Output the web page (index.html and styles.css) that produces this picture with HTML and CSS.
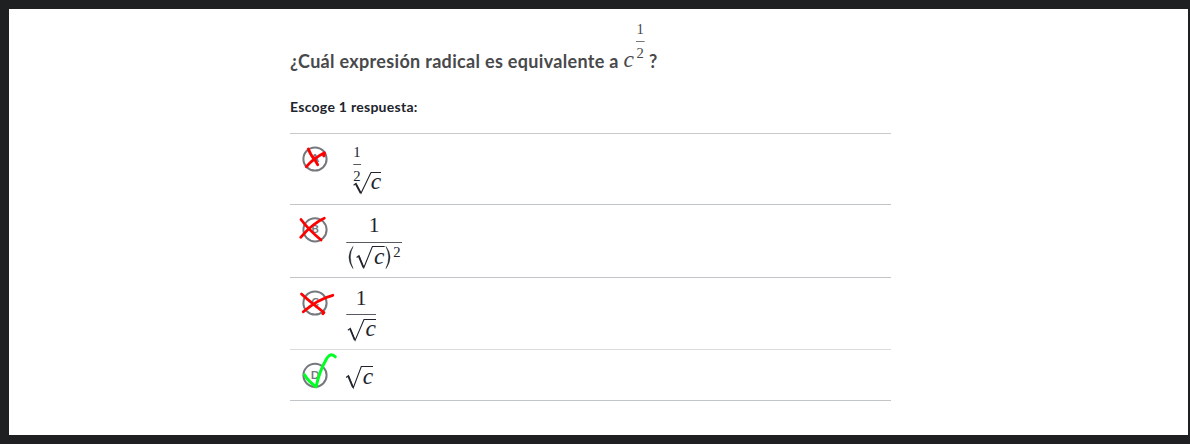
FILE: index.html
```
<!DOCTYPE html>
<html lang="es">
<head>
<meta charset="utf-8">
<title>Expresión radical</title>
<link rel="stylesheet" href="styles.css">
</head>
<body>
<main class="page">
  <section class="exercise">
    <h1 class="question"><span class="question-text">¿Cuál expresión radical es equivalente a</span><svg class="power" width="26" height="58" viewBox="0 0 26 58">
        <text class="var" x="5.8" y="50">c</text>
        <text class="num small" x="17.2" y="17.3">1</text>
        <path class="bar" d="M13 24.5h8.6"/>
        <text class="num small" x="17.2" y="41">2</text>
      </svg><span class="mark">?</span></h1>
    <p class="hint">Escoge 1 respuesta:</p>
    <ul class="choices">
      <li class="choice choice-a">
        <svg class="badge" width="50" height="50" viewBox="0 0 50 50">
          <circle class="ring" cx="25" cy="25" r="11.6"/>
          <text class="letter" x="25" y="28">A</text>
          <path class="wrong" d="M18.3 15Q21 22 25 26L27.7 30.7M16.3 32.7Q24 24 34.5 18.8L33.8 22"/>
        </svg>
        <svg class="formula" width="80" height="70" viewBox="50 0 80 70">
          <text class="num small" x="67" y="22.8">1</text>
          <path class="bar" d="M63.3 30.5h7.8"/>
          <text class="num small" x="67" y="46.7">2</text>
          <path class="root" d="M63.6 51.2l2.4-1.8 5 9.9L81 38.5h10"/>
          <path class="root-heavy" d="M65.8 50l4.8 9"/>
          <text class="var" x="86" y="54.7">c</text>
        </svg>
      </li>
      <li class="choice choice-b">
        <svg class="badge" width="50" height="50" viewBox="0 0 50 50">
          <circle class="ring" cx="25" cy="24.8" r="11.6"/>
          <text class="letter" x="25" y="28.2">B</text>
          <path class="wrong" d="M11 14.5Q18 24 31 35M10.7 32.3Q23 18 34.3 13.2"/>
        </svg>
        <svg class="formula" width="80" height="72" viewBox="50 0 80 72">
          <text class="num" x="84" y="27">1</text>
          <path class="bar" d="M56.3 37.5h55.7"/>
          <path class="paren" d="M63 41.5Q55 52 63 63.5Q57.6 52 63 41.5z"/>
          <path class="root" d="M66.6 52.5l2.4-1.8 4.8 12 8.6-21.2h12.3"/>
          <path class="root-heavy" d="M68.8 51.3l4.6 11"/>
          <text class="var" x="89.3" y="58.7">c</text>
          <path class="paren" d="M96 41.5Q104 52 96 63.5Q101.4 52 96 41.5z"/>
          <text class="num small" x="107" y="52.3">2</text>
        </svg>
      </li>
      <li class="choice choice-c">
        <svg class="badge" width="50" height="50" viewBox="0 0 50 50">
          <circle class="ring" cx="25" cy="25" r="11.6"/>
          <text class="letter" x="25" y="28.3">C</text>
          <path class="wrong" d="M11.5 16Q19 23 34 34.5L32.8 35.8M13.3 33.8Q28 21 42.8 17.3"/>
        </svg>
        <svg class="formula" width="80" height="71" viewBox="50 0 80 71">
          <text class="num" x="71" y="27.2">1</text>
          <path class="bar" d="M56.3 36.5h29.7"/>
          <path class="root" d="M57.9 52.2l2.4-1.8 4.8 12L74 41.5h12"/>
          <path class="root-heavy" d="M60.1 51l4.6 11"/>
          <text class="var" x="80.7" y="58.3">c</text>
        </svg>
      </li>
      <li class="choice choice-d">
        <svg class="badge" width="50" height="50" viewBox="0 0 50 50">
          <circle class="ring" cx="25" cy="25.3" r="11.6"/>
          <text class="letter" x="25" y="29.2">D</text>
          <path class="right" d="M14.5 24.8Q18 31 26 36.8C28 28 31 18 37 8Q41 2 45.3 6.8"/>
        </svg>
        <svg class="formula" width="80" height="50" viewBox="50 0 80 50">
          <path class="root" d="M56.1 27.5l2.4-1.8 4.8 12 8-21.2H83"/>
          <path class="root-heavy" d="M58.3 26.3l4.6 11"/>
          <text class="var" x="78" y="34">c</text>
        </svg>
      </li>
    </ul>
  </section>
</main>
</body>
</html>
```
FILE: styles.css
```
* { box-sizing: border-box; }

body {
  margin: 0;
  height: 444px;
  padding: 9px 2px 9px 9px;
  background: #1f2022;
  font-family: Lato, sans-serif;
  overflow: hidden;
}

.page {
  height: 426px;
  padding-left: 281px;
  background: #fff;
}

.exercise { width: 601px; }

.question {
  display: flex;
  height: 66px;
  margin: 0;
  padding-top: 8px;
  font-size: 18px;
  line-height: 24px;
  font-weight: 700;
  color: #48494b;
}

.question-text, .mark { padding-top: 32px; white-space: nowrap; }
.question-text { width: 333px; letter-spacing: .32px; }
.power { flex: none; fill: #48494b; stroke: #48494b; }

.hint {
  height: 58px;
  margin: 0;
  padding-top: 22px;
  font-size: 14px;
  line-height: 20px;
  font-weight: 700;
  letter-spacing: .28px;
  color: #21242c;
}

.choices {
  margin: 0;
  padding: 0;
  list-style: none;
  border-top: 1px solid #c8c9cb;
}

.choice {
  display: flex;
  border-bottom: 1px solid #c2c5c8;
}

.choice-a { height: 71px; }
.choice-b { height: 73px; }
.choice-c { height: 72px; border-bottom-color: #dadbdc; }
.choice-d { height: 51px; }

.formula { fill: #21242c; stroke: #21242c; }

svg text {
  font-family: "Liberation Serif", serif;
  font-size: 21.5px;
  font-weight: 400;
  text-anchor: middle;
  stroke: none;
}

svg .var { font-size: 23.5px; font-style: italic; }
svg .small { font-size: 14.7px; }
.bar { stroke-width: 1; opacity: .75; }
.root { fill: none; stroke-width: 1.1; }
.root-heavy { fill: none; stroke-width: 1.7; }
.paren { stroke-width: .5; }

.ring { fill: none; stroke: #75787c; stroke-width: 2; }

svg .letter {
  font-family: Lato, sans-serif;
  font-size: 11.5px;
  font-weight: 700;
  fill: #75787c;
}

.wrong, .right {
  fill: none;
  stroke: #f00;
  stroke-width: 2.8;
  stroke-linecap: round;
  stroke-linejoin: round;
}

.right { stroke: #0f2; stroke-width: 3; }
```
